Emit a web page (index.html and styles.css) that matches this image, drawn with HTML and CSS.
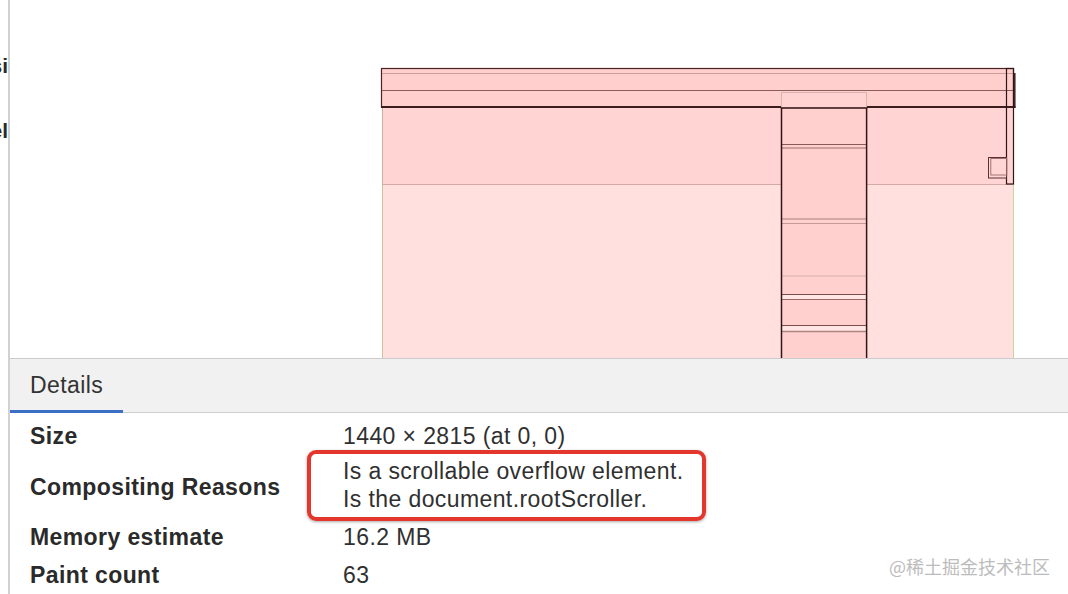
FILE: index.html
```html
<!DOCTYPE html>
<html lang="en">
<head>
<meta charset="utf-8">
<title>Layers - Details</title>
<link rel="stylesheet" href="styles.css">
</head>
<body>
<div class="app">
  <aside class="sidebar">
    <div class="sidebar-label">Composi</div>
    <div class="sidebar-label">Panel</div>
  </aside>
  <main class="main">
    <section class="canvas">
      <svg class="layers" width="1058" height="358" viewBox="10 0 1058 358" xmlns="http://www.w3.org/2000/svg">
        <!-- lower (light) area -->
        <rect x="382" y="184" width="631" height="180" fill="#ffe0de"/>
        <line x1="382.5" y1="184" x2="382.5" y2="358" stroke="#cbc3a2"/>
        <line x1="1013.5" y1="184" x2="1013.5" y2="358" stroke="#c4d6a2"/>
        <!-- upper area -->
        <rect x="382" y="107" width="631" height="77" fill="#ffd4d2"/>
        <line x1="382" y1="184.5" x2="1013" y2="184.5" stroke="#d6a8a6"/>
        <line x1="382.5" y1="107" x2="382.5" y2="184" stroke="#cdb1a0"/>
        <!-- top bar -->
        <rect x="381.5" y="68.5" width="632" height="38.5" fill="#ffcfcd" stroke="#4a2424" stroke-width="1.2"/>
        <line x1="382" y1="73.5" x2="1013" y2="73.5" stroke="#d09c9a"/>
        <line x1="382" y1="90.5" x2="1015" y2="90.5" stroke="#8c5c5a"/>
        <line x1="381" y1="107" x2="1015.5" y2="107" stroke="#3e1c1c" stroke-width="2"/>
        <line x1="1014.8" y1="73" x2="1014.8" y2="108" stroke="#3e1c1c" stroke-width="1.5"/>
        <!-- narrow scrollbar layer -->
        <rect x="1006.5" y="68.5" width="7" height="115.5" fill="none" stroke="#2e1616" stroke-width="1.2"/>
        <!-- small square -->
        <rect x="988.5" y="157.5" width="18" height="20.5" fill="#ffd6d4" stroke="#5a3030"/>
        <rect x="990.8" y="158.5" width="16" height="16.5" fill="none" stroke="#a07270"/>
        <!-- column header -->
        <rect x="781.5" y="92.5" width="85" height="15" fill="#ffd3d1" stroke="#dab4b2"/>
        <!-- column -->
        <rect x="781" y="108" width="86" height="252" fill="#ffd0ce"/>
        <rect x="782" y="295" width="84" height="4" fill="#ffe6e4"/>
        <rect x="782" y="326" width="84" height="5" fill="#ffe6e4"/>
        <line x1="782" y1="144.5" x2="866" y2="144.5" stroke="#8a5a58"/>
        <line x1="782" y1="148" x2="866" y2="148" stroke="#9d6d6b"/>
        <line x1="782" y1="219" x2="866" y2="219" stroke="#c49a98" stroke-width="1.6"/>
        <line x1="782" y1="223.5" x2="866" y2="223.5" stroke="#c49a98"/>
        <line x1="782" y1="276" x2="866" y2="276" stroke="#e2bcba" stroke-width="1.6"/>
        <line x1="782" y1="294.5" x2="866" y2="294.5" stroke="#7c4c4a"/>
        <line x1="782" y1="299.5" x2="866" y2="299.5" stroke="#9a6a68"/>
        <line x1="782" y1="325.5" x2="866" y2="325.5" stroke="#7c4c4a"/>
        <line x1="782" y1="331.5" x2="866" y2="331.5" stroke="#b08280" stroke-width="1.6"/>
        <line x1="780.8" y1="108" x2="867.3" y2="108" stroke="#2e1616" stroke-width="1.5"/>
        <line x1="781.5" y1="108" x2="781.5" y2="358" stroke="#2e1616" stroke-width="1.5"/>
        <line x1="866.6" y1="108" x2="866.6" y2="358" stroke="#2e1616" stroke-width="1.5"/>
      </svg>
    </section>
    <section class="details">
      <div class="tabs">
        <div class="tab">Details</div>
      </div>
      <div class="props">
        <div class="label">Size</div>
        <div class="value">1440 × 2815 (at 0, 0)</div>
        <div class="label">Compositing Reasons</div>
        <div class="value multi">Is a scrollable overflow element.<br>Is the document.rootScroller.</div>
        <div class="label">Memory estimate</div>
        <div class="value">16.2 MB</div>
        <div class="label">Paint count</div>
        <div class="value">63</div>
        <div class="highlight"></div>
      </div>
    </section>
  </main>
</div>
<div class="watermark">@稀土掘金技术社区</div>
</body>
</html>
```
FILE: styles.css
```css
html, body {
  margin: 0;
  padding: 0;
}

body {
  width: 1068px;
  height: 594px;
  overflow: hidden;
  position: relative;
  background: #ffffff;
  font-family: "Liberation Sans", Arial, sans-serif;
  color: #303030;
}

.app {
  display: flex;
  height: 594px;
}

.sidebar {
  flex: none;
  width: 8px;
  border-right: 2px solid #d2d2d2;
  overflow: hidden;
  padding-top: 54px;
}

.sidebar-label {
  display: flex;
  justify-content: flex-end;
  white-space: nowrap;
  font-weight: 700;
  font-size: 21px;
  line-height: 24px;
  color: #2b2b2b;
}

.sidebar-label + .sidebar-label {
  margin-top: 41px;
}

.main {
  flex: 1;
  min-width: 0;
  display: flex;
  flex-direction: column;
}

.canvas {
  flex: none;
  height: 358px;
  background: #ffffff;
}

.layers {
  display: block;
}

.details {
  flex: 1;
  border-top: 1px solid #cbcbcb;
  background: #ffffff;
}

.tabs {
  display: flex;
  height: 53px;
  background: #f1f1f2;
  border-bottom: 1px solid #cfcfcf;
}

.tab {
  padding: 14px 20px 11px;
  margin-bottom: -1px;
  font-size: 23px;
  line-height: 25px;
  letter-spacing: 0.4px;
  color: #333333;
  border-bottom: 3px solid #3b6fc4;
}

.props {
  position: relative;
  display: grid;
  grid-template-columns: 313px 1fr;
  row-gap: 13px;
  padding: 11px 0 0 20px;
  font-size: 23px;
  line-height: 25px;
  letter-spacing: 0.4px;
}

.label {
  align-self: center;
  font-weight: 700;
  color: #2a2a2a;
}

.value {
  color: #303030;
}

.value.multi {
  line-height: 28px;
  margin-top: -5px;
  margin-bottom: -1px;
}

.highlight {
  position: absolute;
  left: 297px;
  top: 37px;
  width: 391px;
  height: 63px;
  border: 4px solid #e3372d;
  border-radius: 9px;
  box-shadow: 0 1px 3px rgba(0, 0, 0, 0.35);
}

.watermark {
  position: absolute;
  right: 18px;
  top: 555px;
  font-family: "Noto Sans CJK SC", "Liberation Sans", sans-serif;
  font-size: 18px;
  line-height: 22px;
  color: #bcbcbc;
}
```
